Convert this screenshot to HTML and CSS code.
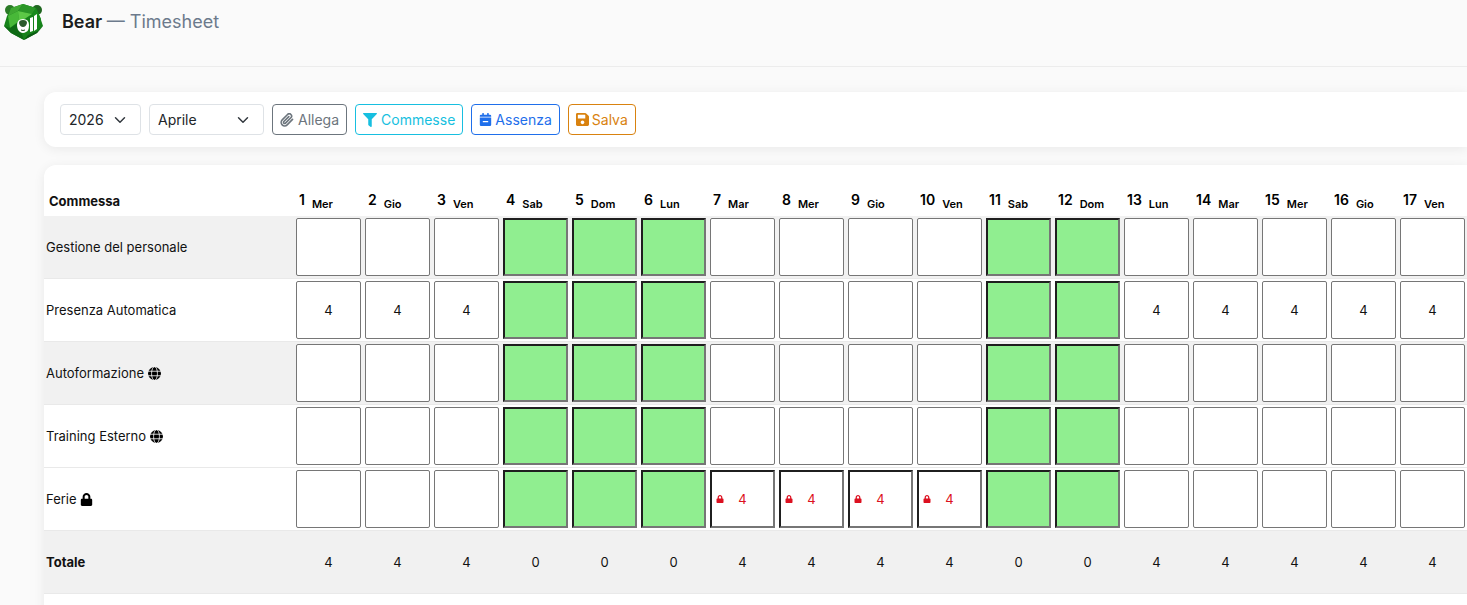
FILE: index.html
```html
<!DOCTYPE html>
<html lang="it">
<head>
    <meta charset="UTF-8">
    <title>Bear — Timesheet</title>
    <meta name="viewport" content="width=device-width, initial-scale=1.0">
    <link rel="stylesheet" href="styles.css">
</head>
<body>
    <!-- Icone condivise -->
    <svg class="sprite" aria-hidden="true">
        <symbol id="i-globe" viewBox="0 0 16 16">
            <circle cx="8" cy="8" r="8"/>
            <g fill="none" stroke="#fff" stroke-width="1">
                <ellipse cx="8" cy="8" rx="3.6" ry="8.4"/>
                <path d="M0 5.2h16M0 10.8h16"/>
            </g>
        </symbol>
        <symbol id="i-lock" viewBox="0 0 448 512">
            <path d="M400 224h-24v-72C376 68.2 307.8 0 224 0S72 68.2 72 152v72H48c-26.5 0-48 21.5-48 48v192c0 26.5 21.5 48 48 48h352c26.5 0 48-21.5 48-48V272c0-26.5-21.5-48-48-48zm-104 0H152v-72c0-39.7 32.3-72 72-72s72 32.3 72 72v72z"/>
        </symbol>
    </svg>

    <header class="topbar">
        <svg class="logo" viewBox="0 0 40 36" aria-hidden="true">
            <circle cx="6" cy="6" r="5" fill="#2c7a27"/>
            <circle cx="33" cy="6" r="5" fill="#1f661f"/>
            <path d="M7 4l12-4 13 4 4 9 3 9-6 7-13 7-13-7-7-7 3-10z" fill="#16821a"/>
            <path d="M7 4l12-4-5 7-10 5z" fill="#3fa832"/>
            <path d="M19 0l13 4-4 6-14-3z" fill="#2a9627"/>
            <path d="M4 12l10-5 1 10-9 7z" fill="#48b838"/>
            <path d="M14 7l14 3-9 6-4 2z" fill="#5cc846"/>
            <path d="M28 10l4-6 5 11-2 11z" fill="#188a1c"/>
            <path d="M0 22l6 2 8-5 6 17-13-7z" fill="#0e6a14"/>
            <path d="M20 36l13-7 6-7-5 5-10 4z" fill="#0b5a12"/>
            <path d="M13 21q0-6 6-6t6 6-3 7q-3 2-6 0-3-2-3-7z" fill="#fff"/>
            <path d="M15 19q0-3 4-3t4 3q-1 4-4 4t-4-4z" fill="#2b5a2c"/>
            <path d="M17 26q2 1 4 0" fill="none" stroke="#1a4a1c"/>
            <path d="M26 14l3-1v14l-3 1zM30 12l3-2v15l-3 2z" fill="#fff"/>
        </svg>
        <h1 class="title">Bear <span>— Timesheet</span></h1>
    </header>

    <main class="content">
        <!-- Filtri e azioni -->
        <form class="card toolbar">
            <select class="select year" aria-label="Anno">
                <option>2026</option>
            </select>
            <select class="select month" aria-label="Mese">
                <option>Aprile</option>
            </select>
            <button type="button" class="btn btn-grey">
                <svg viewBox="0 0 24 24" aria-hidden="true"><path fill="none" stroke="currentColor" stroke-width="2.8" stroke-linecap="round" d="M21.44 11.05l-9.19 9.19a6 6 0 0 1-8.49-8.49l9.19-9.19a4 4 0 0 1 5.66 5.66l-9.2 9.19a2 2 0 0 1-2.83-2.83l8.49-8.48"/></svg>
                Allega
            </button>
            <button type="button" class="btn btn-cyan">
                <svg viewBox="0 0 512 512" aria-hidden="true"><path d="M487.976 0H24.028C2.71 0-8.047 25.866 7.058 40.971L192 225.941V432c0 7.831 3.821 15.17 10.237 19.662l80 55.98C298.02 518.69 320 507.493 320 487.98V225.941l184.947-184.97C520.021 25.896 509.338 0 487.976 0z"/></svg>
                Commesse
            </button>
            <button type="button" class="btn btn-blue">
                <svg viewBox="0 0 448 512" aria-hidden="true"><path fill-rule="evenodd" d="M0 150V112q0-48 48-48h48V20q0-20 20-20h24q20 0 20 20v44h128V20q0-20 20-20h24q20 0 20 20v44h48q48 0 48 48v38zM0 180h448v284q0 48-48 48H48q-48 0-48-48zM118 318v44h212v-44z"/></svg>
                Assenza
            </button>
            <button type="button" class="btn btn-orange">
                <svg viewBox="0 32 448 448" aria-hidden="true"><path d="M433.941 129.941l-83.882-83.882A48 48 0 0 0 316.118 32H48C21.49 32 0 53.49 0 80v352c0 26.51 21.49 48 48 48h352c26.51 0 48-21.49 48-48V163.882a48 48 0 0 0-14.059-33.941zM224 416c-35.346 0-64-28.654-64-64 0-35.346 28.654-64 64-64s64 28.654 64 64c0 35.346-28.654 64-64 64zm96-304.52V212c0 6.627-5.373 12-12 12H76c-6.627 0-12-5.373-12-12V108c0-6.627 5.373-12 12-12h228.52c3.183 0 6.235 1.264 8.485 3.515l3.48 3.48A11.996 11.996 0 0 1 320 111.48z"/></svg>
                Salva
            </button>
        </form>

        <!-- Griglia delle ore -->
        <section class="card sheet">
            <table class="grid">
                <thead><tr id="days"><th class="job" scope="col">Commessa</th></tr></thead>
                <tbody id="rows"></tbody>
                <tfoot><tr id="totals"><th class="job" scope="row">Totale</th></tr></tfoot>
            </table>
        </section>
    </main>

    <script>
        const weekdays = ['Mer', 'Gio', 'Ven', 'Sab', 'Dom', 'Lun', 'Mar'];
        const numDays = 17;
        const holidays = [4, 5, 6, 11, 12];
        const workdays = [1, 2, 3, 13, 14, 15, 16, 17];
        const leave = [7, 8, 9, 10];

        const jobs = [
            { name: 'Gestione del personale', days: [] },
            { name: 'Presenza Automatica', days: workdays },
            { name: 'Autoformazione', icon: 'globe', days: [] },
            { name: 'Training Esterno', icon: 'globe', days: [] },
            { name: 'Ferie', icon: 'lock', days: leave, locked: true }
        ];

        function icon(name) {
            return `<svg class="icon icon-${name}" aria-hidden="true"><use href="#i-${name}"/></svg>`;
        }

        // Intestazioni e totali
        for (let d = 1; d <= numDays; d++) {
            const total = holidays.includes(d) ? 0 : 4;
            document.getElementById('days').insertAdjacentHTML('beforeend',
                `<th class="day" scope="col">${d}<small>${weekdays[(d - 1) % 7]}</small></th>`);
            document.getElementById('totals').insertAdjacentHTML('beforeend', `<td>${total}</td>`);
        }

        // Una riga per commessa
        jobs.forEach(job => {
            let html = `<th class="job" scope="row">${job.name}${job.icon ? ' ' + icon(job.icon) : ''}</th>`;
            for (let d = 1; d <= numDays; d++) {
                const filled = job.days.includes(d);
                const locked = filled && job.locked;
                const state = holidays.includes(d) ? 'holiday' : locked ? 'locked' : '';
                html += `<td><div class="cell"><input type="text" class="${state}" value="${filled ? 4 : ''}"
                    aria-label="${job.name}, giorno ${d}"${locked ? ' readonly' : ''}>${locked ? icon('lock') : ''}</div></td>`;
            }
            document.getElementById('rows').insertAdjacentHTML('beforeend', `<tr>${html}</tr>`);
        });
    </script>
</body>
</html>
```

FILE: styles.css
```css
* {
    box-sizing: border-box;
}

body {
    margin: 0;
    background: #fafafa;
    font-family: Inter, 'Open Sans', sans-serif;
    font-size: 13px;
    color: #111;
    overflow-x: hidden;
}

.sprite {
    display: none;
}

.topbar {
    display: flex;
    align-items: flex-start;
    gap: 18px;
    height: 67px;
    padding: 4px;
    border-bottom: 1px solid #ececec;
}

.logo {
    width: 40px;
    height: 36px;
}

.title {
    margin: 4px 0 0;
    font-size: 18px;
    line-height: 28px;
    font-weight: 600;
    color: #1b1d20;
}

.title span {
    font-weight: 400;
    color: #6c7a8c;
}

.content {
    padding: 25px 0 0 44px;
}

.card {
    background: #fff;
    border-radius: 12px 0 0 12px;
    box-shadow: 0 2px 12px rgba(0, 0, 0, 0.07);
}

.toolbar {
    display: flex;
    gap: 8px;
    margin-bottom: 18px;
    padding: 12px 16px;
}

.select,
.btn {
    height: 31px;
    border-radius: 4px;
    font-family: inherit;
    font-size: 14px;
}

.select {
    appearance: none;
    padding: 0 8px;
    border: 1px solid #dee2e6;
    color: #212529;
    background: #fff url("data:image/svg+xml,%3Csvg xmlns='http://www.w3.org/2000/svg' viewBox='0 0 16 16'%3E%3Cpath fill='none' stroke='%23343a40' stroke-linecap='round' stroke-linejoin='round' stroke-width='2' d='m2 5 6 6 6-6'/%3E%3C/svg%3E") no-repeat right 14px center / 12px 12px;
}

.year {
    width: 81px;
}

.month {
    width: 115px;
}

.btn {
    display: flex;
    align-items: center;
    gap: 4px;
    padding: 0 7px;
    background: #fff;
    border: 1px solid currentColor;
    cursor: pointer;
}

.btn svg {
    width: 14px;
    height: 14px;
    fill: currentColor;
}

.btn-grey {
    color: #6c757d;
}

.btn-cyan {
    color: #17bfe0;
}

.btn-blue {
    color: #1f6feb;
}

.btn-orange {
    color: #d9820f;
}

.btn-blue,
.btn-orange {
    gap: 3px;
}

.btn-blue svg,
.btn-orange svg {
    width: 13px;
    height: 13px;
}

.sheet {
    padding: 20px 0 40px;
}

.grid {
    width: 1423px;
    table-layout: fixed;
    border-collapse: separate;
    border-spacing: 0;
}

.grid th,
.grid td {
    padding: 2px;
    border-bottom: 1px solid #e9e9e9;
    text-align: center;
}

.grid .job {
    width: 250px;
    text-align: left;
    font-weight: 400;
}

.grid thead th {
    height: 31px;
    padding: 0 5px;
    border: 0;
    text-align: left;
    white-space: nowrap;
}

.grid .day {
    font-size: 14px;
    font-weight: 600;
    color: #000;
}

.day small {
    margin-left: 7px;
    font-size: 11px;
    vertical-align: -3px;
}

.grid thead .job,
.grid tfoot .job {
    font-weight: 700;
}

.grid tbody tr:nth-child(odd) {
    background: #f1f1f1;
}

.grid tbody tr:last-child {
    background: #fff;
}

.grid tfoot tr {
    height: 63px;
    background: #f1f1f1;
}

.cell {
    position: relative;
}

.cell input {
    display: block;
    width: 100%;
    height: 58px;
    padding: 0;
    border: 1px solid #767676;
    border-radius: 2px;
    background: #fff;
    font: inherit;
    color: #111;
    text-align: center;
}

.cell .holiday,
.cell .locked {
    border: 2px solid;
    border-color: #1f1f1f #767676 #767676 #1f1f1f;
    border-radius: 0;
}

.cell .holiday {
    background: #90ee90;
}

.cell .locked {
    color: #dc1020;
}

.icon {
    width: 13px;
    height: 13px;
    vertical-align: -2px;
}

/* Lucchetto sopra la casella bloccata */
.cell .icon {
    position: absolute;
    left: 6px;
    top: 25px;
    width: 8px;
    height: 8px;
    fill: #dc1020;
}
```
